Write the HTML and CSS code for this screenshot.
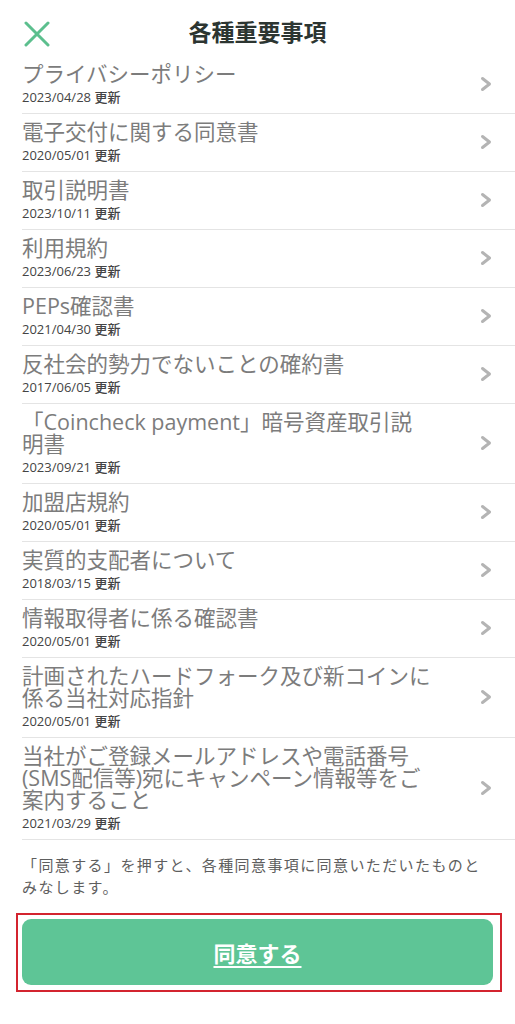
FILE: index.html
```html
<!DOCTYPE html>
<html lang="ja">
<head>
<meta charset="utf-8">
<title>各種重要事項</title>
<link rel="stylesheet" href="styles.css">
</head>
<body>
<div class="screen">
  <header class="header">
    <svg class="close" viewBox="0 0 26 26" aria-label="閉じる">
      <path d="M2 2 L24 24 M24 2 L2 24" stroke="#5cbf8e" stroke-width="3" stroke-linecap="round" fill="none"/>
    </svg>
    <h1 class="header-title">各種重要事項</h1>
    <span class="header-spacer"></span>
  </header>

  <ul class="list">
    <li class="item"><div class="item-text"><div class="title">プライバシーポリシー</div><div class="date">2023/04/28 更新</div></div><svg class="chev" viewBox="0 0 12 16"><polyline points="2.5,2.5 9.5,8 2.5,13.5"/></svg></li>
    <li class="item"><div class="item-text"><div class="title">電子交付に関する同意書</div><div class="date">2020/05/01 更新</div></div><svg class="chev" viewBox="0 0 12 16"><polyline points="2.5,2.5 9.5,8 2.5,13.5"/></svg></li>
    <li class="item"><div class="item-text"><div class="title">取引説明書</div><div class="date">2023/10/11 更新</div></div><svg class="chev" viewBox="0 0 12 16"><polyline points="2.5,2.5 9.5,8 2.5,13.5"/></svg></li>
    <li class="item"><div class="item-text"><div class="title">利用規約</div><div class="date">2023/06/23 更新</div></div><svg class="chev" viewBox="0 0 12 16"><polyline points="2.5,2.5 9.5,8 2.5,13.5"/></svg></li>
    <li class="item"><div class="item-text"><div class="title">PEPs確認書</div><div class="date">2021/04/30 更新</div></div><svg class="chev" viewBox="0 0 12 16"><polyline points="2.5,2.5 9.5,8 2.5,13.5"/></svg></li>
    <li class="item"><div class="item-text"><div class="title">反社会的勢力でないことの確約書</div><div class="date">2017/06/05 更新</div></div><svg class="chev" viewBox="0 0 12 16"><polyline points="2.5,2.5 9.5,8 2.5,13.5"/></svg></li>
    <li class="item"><div class="item-text"><div class="title">「Coincheck payment」暗号資産取引説<br>明書</div><div class="date">2023/09/21 更新</div></div><svg class="chev" viewBox="0 0 12 16"><polyline points="2.5,2.5 9.5,8 2.5,13.5"/></svg></li>
    <li class="item"><div class="item-text"><div class="title">加盟店規約</div><div class="date">2020/05/01 更新</div></div><svg class="chev" viewBox="0 0 12 16"><polyline points="2.5,2.5 9.5,8 2.5,13.5"/></svg></li>
    <li class="item"><div class="item-text"><div class="title">実質的支配者について</div><div class="date">2018/03/15 更新</div></div><svg class="chev" viewBox="0 0 12 16"><polyline points="2.5,2.5 9.5,8 2.5,13.5"/></svg></li>
    <li class="item"><div class="item-text"><div class="title">情報取得者に係る確認書</div><div class="date">2020/05/01 更新</div></div><svg class="chev" viewBox="0 0 12 16"><polyline points="2.5,2.5 9.5,8 2.5,13.5"/></svg></li>
    <li class="item"><div class="item-text"><div class="title">計画されたハードフォーク及び新コインに<br>係る当社対応指針</div><div class="date">2020/05/01 更新</div></div><svg class="chev" viewBox="0 0 12 16"><polyline points="2.5,2.5 9.5,8 2.5,13.5"/></svg></li>
    <li class="item"><div class="item-text"><div class="title">当社がご登録メールアドレスや電話番号<br>(SMS配信等)宛にキャンペーン情報等をご<br>案内すること</div><div class="date">2021/03/29 更新</div></div><svg class="chev" viewBox="0 0 12 16"><polyline points="2.5,2.5 9.5,8 2.5,13.5"/></svg></li>
  </ul>

  <p class="note">「同意する」を押すと、各種同意事項に同意いただいたものとみなします。</p>

  <div class="highlight">
    <button class="agree" type="button">同意する</button>
  </div>
</div>
</body>
</html>
```

FILE: styles.css
```css
* { box-sizing: border-box; }

html, body {
  margin: 0;
  padding: 0;
  background: #ffffff;
}

body {
  font-family: "Open Sans", "Noto Sans CJK JP", sans-serif;
  color: #333;
}

.screen {
  width: 515px;
}

.header {
  height: 56px;
  display: grid;
  grid-template-columns: 80px 1fr 80px;
  align-items: start;
}

.close {
  width: 26px;
  height: 26px;
  margin-left: 24px;
  margin-top: 21px;
}

.header-title {
  margin: 0;
  padding-top: 16px;
  text-align: center;
  font-size: 23px;
  font-weight: 700;
  color: #2c3531;
  line-height: 30px;
  font-family: "Noto Sans CJK JP", sans-serif;
}

.list {
  list-style: none;
  margin: 0;
  padding: 0;
}

.item {
  display: flex;
  align-items: center;
  margin-left: 22px;
  padding: 7px 0 8px 0;
  border-bottom: 1px solid #e4e4e4;
}

.item-text {
  flex: 1;
  min-width: 0;
}

.title {
  font-size: 21.5px;
  line-height: 22px;
  color: #7c7c7c;
}

.date {
  margin-top: 4px;
  font-size: 13px;
  line-height: 16px;
  font-weight: 500;
  color: #444444;
}

.chev {
  width: 12px;
  height: 16px;
  margin: 0 23px 0 35px;
  flex: none;
}

.chev polyline {
  fill: none;
  stroke: #b4b4b4;
  stroke-width: 3;
  stroke-linecap: round;
  stroke-linejoin: round;
}

.note {
  margin: 14px 22px 0 22px;
  font-size: 15px;
  letter-spacing: 1.4px;
  line-height: 22px;
  color: #5e5e5e;
  font-family: "Noto Sans CJK JP", sans-serif;
}

.highlight {
  margin: 15px 13px 0 16px;
  border: 2px solid #d3242f;
  padding: 4px 7px 5px 4px;
}

.agree {
  display: block;
  width: 100%;
  height: 66px;
  border: none;
  border-radius: 9px;
  background: #5ec596;
  color: #ffffff;
  font-family: "Noto Sans CJK JP", sans-serif;
  font-size: 22px;
  font-weight: 700;
  text-decoration: underline;
  text-underline-offset: 4px;
  text-decoration-thickness: 2px;
  cursor: pointer;
}
```
